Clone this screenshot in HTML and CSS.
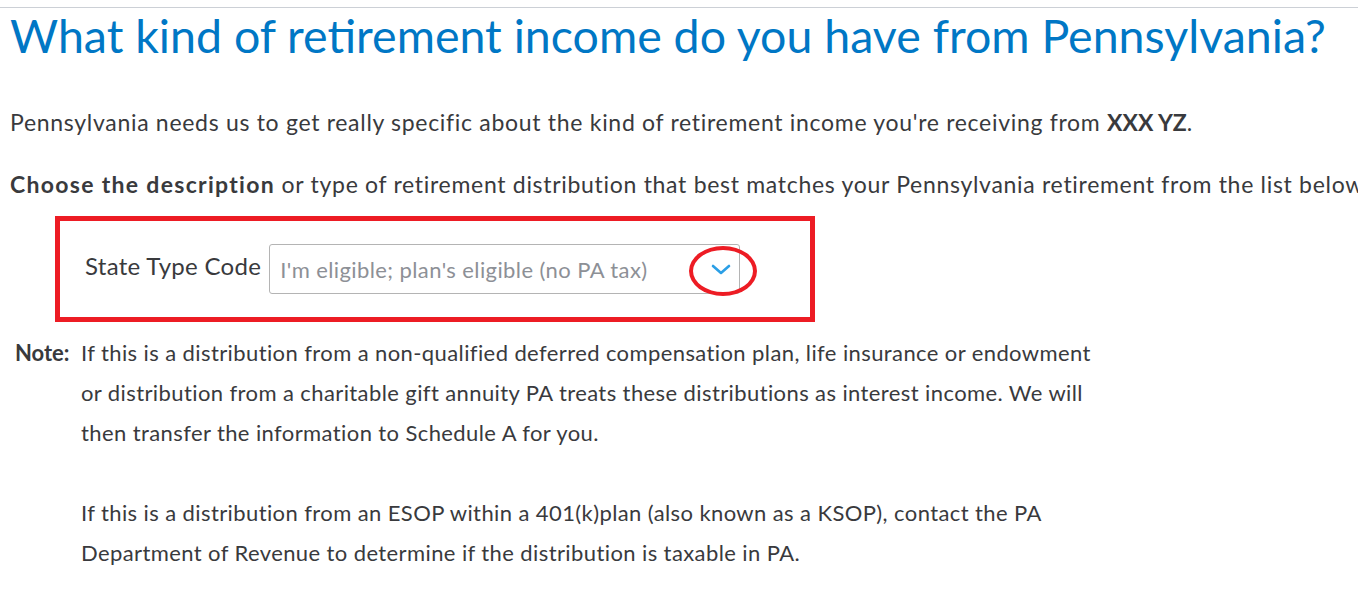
FILE: index.html
```html
<!DOCTYPE html>
<html lang="en">
<head>
    <title>Retirement Income</title>
    <link rel="stylesheet" href="styles.css">
</head>
<body>
    <div class="page">
        <h1 class="title">What kind of retirement income do you have from Pennsylvania?</h1>
        <p class="intro">Pennsylvania needs us to get really specific about the kind of retirement income you're receiving from <b class="tight">XXX YZ</b>.</p>
        <p class="intro nowrap"><b>Choose the description</b> or type of retirement distribution that best matches your Pennsylvania retirement from the list below.</p>

        <div class="highlight">
            <label class="field-label" for="stateType">State Type Code</label>
            <div class="select">
                <span class="select-value">I'm eligible; plan's eligible (no PA tax)</span>
                <span class="chevron">
                    <svg width="20" height="11" viewBox="0 0 20 11"><path d="M2 2 L10 9 L18 2" fill="none" stroke="#2b9fe6" stroke-width="2.6" stroke-linecap="round" stroke-linejoin="round"/></svg>
                </span>
                <span class="circle"></span>
            </div>
        </div>

        <div class="note">
            <span class="note-label">Note:</span>
            <div class="note-body">
                <p>If this is a distribution from a non-qualified deferred compensation plan, life insurance or endowment or distribution from a charitable gift annuity PA treats these distributions as interest income. We will then transfer the information to Schedule A for you.</p>
                <p>If this is a distribution from an ESOP within a 401(k)plan (also known as a KSOP), contact the PA Department of Revenue to determine if the distribution is taxable in PA.</p>
            </div>
        </div>
    </div>
</body>
</html>
```

FILE: styles.css
```css
body {
    margin: 0;
    font-family: Lato, "Noto Sans", sans-serif;
    color: #393a3d;
    background-color: #ffffff;
}

.page {
    margin-top: 7px;
    border-top: 1px solid #ccd0d6;
    padding: 0 0 0 10px;
    overflow: hidden;
}

.title {
    margin: -1px 0 0 0;
    font-size: 46.5px;
    font-weight: 400;
    line-height: 56px;
    color: #0077c5;
    white-space: nowrap;
}

.intro {
    margin: 46px 0 0 0;
    font-size: 23px;
    line-height: 26px;
    letter-spacing: 0.7px;
}

.intro + .intro {
    margin-top: 36px;
}

.nowrap {
    white-space: nowrap;
}

.intro b {
    font-weight: 700;
    letter-spacing: 1.3px;
}

.intro b.tight {
    letter-spacing: 0;
}

.highlight {
    display: flex;
    align-items: center;
    width: 725px;
    height: 96px;
    margin: 19px 0 0 45px;
    border: 5px solid #ed1c24;
    padding-left: 25px;
}

.field-label {
    font-size: 24px;
    letter-spacing: 0.3px;
    margin-right: 8px;
    margin-top: -8px;
}

.select {
    position: relative;
    display: flex;
    align-items: center;
    justify-content: space-between;
    width: 459px;
    height: 48px;
    border: 1px solid #b4b4b4;
    border-radius: 3px;
    padding-left: 10px;
}

.select-value {
    font-size: 22px;
    letter-spacing: 0.4px;
    color: #8d9096;
}

.chevron {
    display: flex;
    width: 36px;
    justify-content: center;
}

.circle {
    position: absolute;
    left: 419px;
    top: 1px;
    width: 60px;
    height: 42px;
    border: 4px solid #ed1c24;
    border-radius: 50%;
}

.note {
    display: flex;
    margin-top: 11px;
    padding-left: 5px;
    font-size: 22px;
    line-height: 40px;
    letter-spacing: 0.4px;
}

.note-label {
    font-weight: 700;
    letter-spacing: 0;
    width: 66px;
    flex-shrink: 0;
}

.note-body {
    width: 1025px;
}

.note-body p {
    margin: 0 0 40px 0;
}
```
